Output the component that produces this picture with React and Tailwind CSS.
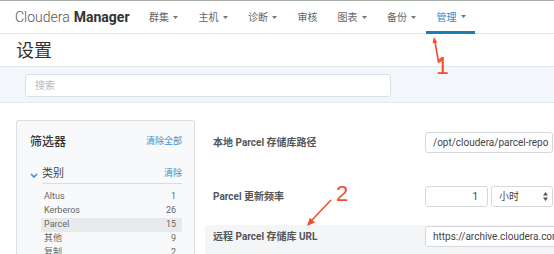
import React from "react";

const navItems = [
  { label: "群集", caret: true },
  { label: "主机", caret: true },
  { label: "诊断", caret: true },
  { label: "审核", caret: false },
  { label: "图表", caret: true },
  { label: "备份", caret: true },
  { label: "管理", caret: true, active: true },
];

const categories = [
  { name: "Altus", count: 1 },
  { name: "Kerberos", count: 26 },
  { name: "Parcel", count: 15, selected: true },
  { name: "其他", count: 9 },
  { name: "复制", count: 2 },
];

function Caret({ active }) {
  return (
    <svg width="5" height="3" viewBox="0 0 5 3" className="ml-[4px] mt-[1px]">
      <path d="M0 0h5L2.5 3z" fill={active ? "#2b87c9" : "#777"} />
    </svg>
  );
}

function SelectArrows() {
  return (
    <svg width="5" height="9" viewBox="0 0 5 9">
      <path d="M2.5 0L5 3.5H0z M2.5 9L5 5.5H0z" fill="#555" />
    </svg>
  );
}

export default function App() {
  return (
    <div
      className="relative w-[554px] h-[254px] overflow-hidden bg-white text-[#333]"
      style={{ fontFamily: 'Roboto, "Noto Sans CJK SC", sans-serif' }}
    >
      <div className="h-px bg-[#a3ada3]" />

      {/* top nav */}
      <div className="flex h-[33px] items-stretch border-b border-[#e3e3e3]">
        <div className="flex w-[138px] shrink-0 items-center pl-[15px] text-[14px]">
          <span className="font-light text-[#555]">Cloudera</span>
          <span className="ml-[4px] font-bold text-[#333]">Manager</span>
        </div>
        {navItems.map((n) => (
          <div
            key={n.label}
            className={`flex shrink-0 items-center pl-[11px] text-[10px] ${
              n.caret ? "w-[49.5px]" : "w-[40px]"
            } ${
              n.active
                ? "-mb-px border-b-[3px] border-[#1f7ab8] text-[#2b87c9]"
                : "text-[#666]"
            }`}
          >
            <span className={n.active ? "mt-[2px]" : ""}>{n.label}</span>
            {n.caret && <Caret active={n.active} />}
          </div>
        ))}
      </div>

      {/* page title */}
      <div className="flex h-[32px] items-center pl-[16px] text-[18px] text-[#333]">
        设置
      </div>

      {/* search band */}
      <div className="border-y border-[#e3e8ed] bg-[#f3f7fb] pl-[25px] pt-[7px] pb-[5px]">
        <input
          type="text"
          placeholder="搜索"
          className="block h-[23px] w-[366px] rounded-[3px] border border-[#dcdfe3] bg-white pl-[9px] text-[10px] outline-none placeholder:text-[#b8b8b8]"
        />
      </div>

      <div className="flex pt-[17px]">
        {/* filters */}
        <div className="ml-[16px] h-[200px] w-[179px] shrink-0 rounded-[2px] border border-[#dde0e3] bg-[#f8f9fb]">
          <div className="mt-[13px] flex h-[16px] items-center justify-between pl-[13px] pr-[12px]">
            <span className="text-[12px] font-medium text-[#333]">筛选器</span>
            <span className="text-[9px] text-[#3a8fc7]">清除全部</span>
          </div>

          <div className="mt-[16px] flex pl-[13px] pr-[12px]">
            <div className="flex w-[12px] items-center">
              <svg width="8" height="5" viewBox="0 0 8 5">
                <path d="M1 1l3 3 3-3" fill="none" stroke="#3a8fc7" strokeWidth="1.6" />
              </svg>
            </div>
            <div className="flex h-[18px] flex-1 items-center justify-between border-b border-[#d8dbdf] pb-px">
              <span className="text-[11px] text-[#444]">类别</span>
              <span className="text-[9px] text-[#3a8fc7]">清除</span>
            </div>
          </div>

          <div className="ml-[24px] mr-[12px] mt-[6px]">
            {categories.map((c) => (
              <div
                key={c.name}
                className={`flex h-[14px] items-center justify-between pl-[3px] pr-[6px] text-[9px] text-[#666] ${
                  c.selected ? "bg-[#e8e9eb] text-[#444]" : ""
                }`}
              >
                <span>{c.name}</span>
                <span>{c.count}</span>
              </div>
            ))}
          </div>
        </div>

        {/* settings */}
        <div className="ml-[10px] min-w-0 flex-1 overflow-hidden">
          <div className="flex h-[52px] items-start pt-[12px]">
            <div className="flex h-[21px] w-[220px] shrink-0 items-center pl-[8px] text-[10px] font-bold text-[#555]">
              本地 Parcel 存储库路径
            </div>
            <div className="flex h-[21px] w-[128px] shrink-0 items-center overflow-hidden whitespace-nowrap rounded-[3px] border border-[#d5d8dc] bg-white pl-[7px] text-[10px] text-[#444]">
              /opt/cloudera/parcel-repo
            </div>
          </div>

          <div className="flex h-[53px] items-start pt-[14px]">
            <div className="flex h-[21px] w-[220px] shrink-0 items-center pl-[8px] text-[10px] font-bold text-[#555]">
              Parcel 更新频率
            </div>
            <div className="flex h-[21px] w-[63px] shrink-0 items-center justify-end rounded-[3px] border border-[#d5d8dc] bg-white pr-[9px] text-[10px] text-[#444]">
              1
            </div>
            <div className="ml-[3px] flex h-[21px] w-[62px] shrink-0 items-center justify-between rounded-[3px] border border-[#d5d8dc] bg-white pl-[7px] pr-[4px] text-[10px] text-[#444]">
              <span>小时</span>
              <SelectArrows />
            </div>
          </div>

          <div className="flex h-[40px] items-start bg-[#f4f5f7] pt-px">
            <div className="flex h-[21px] w-[220px] shrink-0 items-center pl-[8px] text-[10px] font-bold text-[#555]">
              远程 Parcel 存储库 URL
            </div>
            <div className="flex h-[21px] w-[220px] shrink-0 items-center overflow-hidden whitespace-nowrap rounded-[3px] border border-[#d5d8dc] bg-white pl-[7px] text-[10px] text-[#444]">
              https://archive.cloudera.com/cdh6/
            </div>
          </div>
        </div>
      </div>

      {/* annotations */}
      <svg
        className="pointer-events-none absolute left-0 top-0"
        width="554"
        height="254"
        viewBox="0 0 554 254"
      >
        <path d="M435 42 L438.5 62 L442 60" fill="none" stroke="#f2502a" strokeWidth="1.6" />
        <path d="M434 37 L437.4 42.5 L432.5 43.3 Z" fill="#f2502a" />
        <path d="M331 200 L312 220" fill="none" stroke="#f2502a" strokeWidth="1.6" />
        <path d="M307 226 L315 222.5 L309.8 217.7 Z" fill="#f2502a" />
      </svg>
      <span
        className="pointer-events-none absolute left-[436px] top-[55px] text-[23px] leading-none text-[#f2502a]"
        style={{ fontFamily: '"Liberation Sans", sans-serif' }}
      >
        1
      </span>
      <span
        className="pointer-events-none absolute left-[336px] top-[183px] text-[22px] leading-none text-[#f2502a]"
        style={{ fontFamily: '"Liberation Sans", sans-serif' }}
      >
        2
      </span>
    </div>
  );
}
